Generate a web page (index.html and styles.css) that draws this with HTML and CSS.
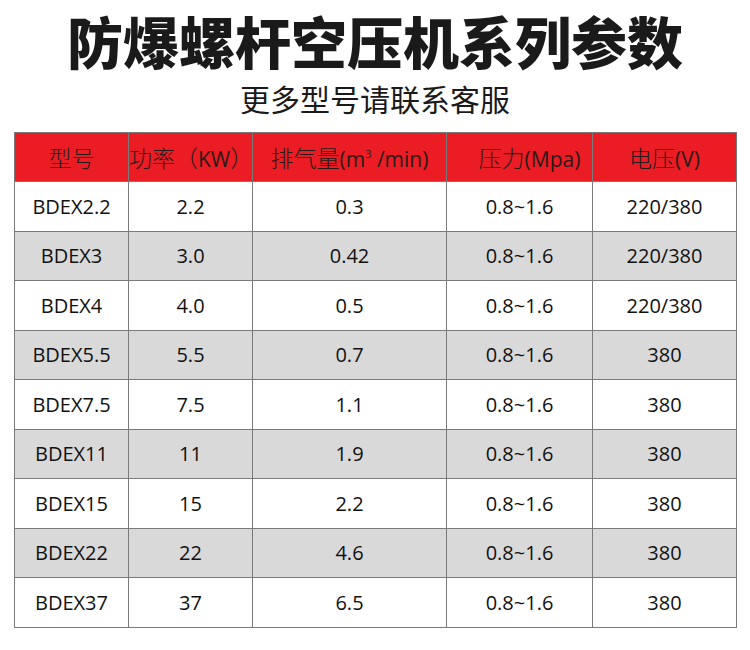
FILE: index.html
```html
<!DOCTYPE html>
<html lang="zh-CN">
<head>
<meta charset="utf-8">
<title>防爆螺杆空压机系列参数</title>
<link rel="stylesheet" href="styles.css">
</head>
<body>
<div class="page">
  <h1 class="title">防爆螺杆空压机系列参数</h1>
  <p class="subtitle">更多型号请联系客服</p>
  <table class="spec">
    <colgroup>
      <col class="c1"><col class="c2"><col class="c3"><col class="c4"><col class="c5">
    </colgroup>
    <thead>
      <tr>
        <th><span class="zh">型号</span></th>
        <th><span class="zh">功率（</span>KW<span class="zh">）</span></th>
        <th><span class="zh">排气量</span>(m<sup>3</sup> /min)</th>
        <th class="shift"><span class="zh">压力</span>(Mpa)</th>
        <th><span class="zh">电压</span>(V)</th>
      </tr>
    </thead>
    <tbody>
      <tr><td>BDEX2.2</td><td>2.2</td><td>0.3</td><td>0.8~1.6</td><td>220/380</td></tr>
      <tr><td>BDEX3</td><td>3.0</td><td>0.42</td><td>0.8~1.6</td><td>220/380</td></tr>
      <tr><td>BDEX4</td><td>4.0</td><td>0.5</td><td>0.8~1.6</td><td>220/380</td></tr>
      <tr><td>BDEX5.5</td><td>5.5</td><td>0.7</td><td>0.8~1.6</td><td>380</td></tr>
      <tr><td>BDEX7.5</td><td>7.5</td><td>1.1</td><td>0.8~1.6</td><td>380</td></tr>
      <tr><td>BDEX11</td><td>11</td><td>1.9</td><td>0.8~1.6</td><td>380</td></tr>
      <tr><td>BDEX15</td><td>15</td><td>2.2</td><td>0.8~1.6</td><td>380</td></tr>
      <tr><td>BDEX22</td><td>22</td><td>4.6</td><td>0.8~1.6</td><td>380</td></tr>
      <tr><td>BDEX37</td><td>37</td><td>6.5</td><td>0.8~1.6</td><td>380</td></tr>
    </tbody>
  </table>
</div>
</body>
</html>
```

FILE: styles.css
```css
html, body {
  margin: 0;
  padding: 0;
  background: #ffffff;
}

.page {
  width: 750px;
  height: 650px;
  overflow: hidden;
  font-family: "Open Sans", "Noto Sans CJK SC", sans-serif;
  color: #111111;
}

.title {
  margin: 0;
  padding-top: 12px;
  height: 56px;
  font-family: "Noto Sans CJK SC", sans-serif;
  font-weight: 900;
  font-size: 56px;
  line-height: 56px;
  text-align: center;
  color: #1a1a1a;
}

.subtitle {
  margin: 0;
  padding-top: 13px;
  height: 34px;
  font-family: "Noto Sans CJK SC", sans-serif;
  font-weight: 400;
  font-size: 30px;
  line-height: 34px;
  text-align: center;
  color: #1a1a1a;
}

.spec {
  margin: 17px 0 0 14px;
  width: 722px;
  border-collapse: collapse;
  table-layout: fixed;
}

.c1 { width: 114px; }
.c2 { width: 124px; }
.c3 { width: 194px; }
.c4 { width: 146px; }
.c5 { width: 144px; }

.spec th,
.spec td {
  border: 1px solid #7a7a7a;
  padding: 0;
  text-align: center;
  vertical-align: middle;
}

.spec th {
  height: 48px;
  background: #ec1c24;
  font-family: "Open Sans", "Noto Sans CJK SC", sans-serif;
  font-weight: 400;
  font-size: 21px;
  color: #2a1a1a;
  white-space: nowrap;
}

.spec th .zh {
  font-family: "Noto Sans CJK SC", sans-serif;
  font-weight: 300;
  font-size: 23px;
}

.spec th sup {
  font-size: 11px;
  vertical-align: 9px;
  line-height: 0;
}

.spec th.shift {
  padding-left: 20px;
}

.spec td {
  height: 48.5px;
  font-size: 20px;
  color: #111111;
}

.spec tbody tr:nth-child(even) td {
  background: #d9d9d9;
}
```
